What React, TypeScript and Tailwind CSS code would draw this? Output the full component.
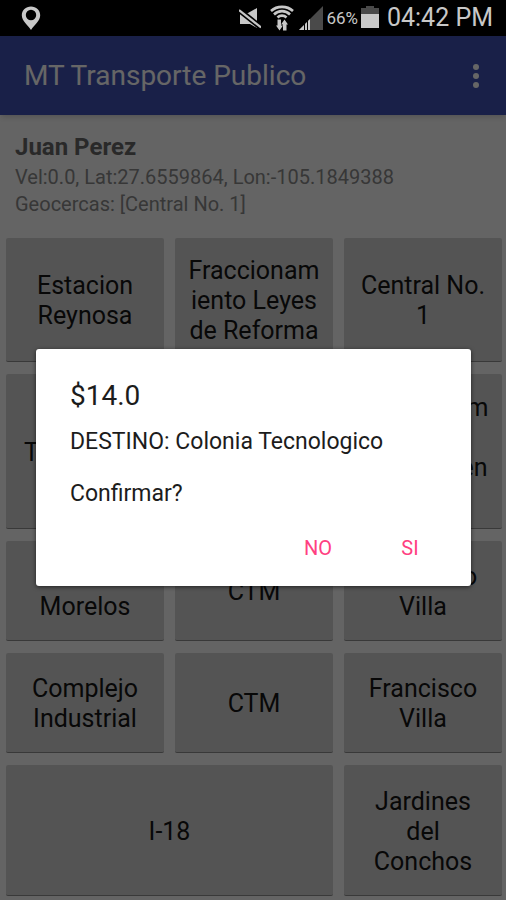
import React from "react";

type Tile = { lines: string[]; wide?: boolean; size: string };

const tiles: Tile[] = [
  { lines: ["Estacion", "Reynosa"], size: "min-h-[124px]" },
  { lines: ["Fraccionam", "iento Leyes", "de Reforma"], size: "min-h-[124px]" },
  { lines: ["Central No.", "1"], size: "min-h-[124px]" },
  { lines: ["Tecnologia"], size: "min-h-[155px]" },
  { lines: [], size: "min-h-[155px]" },
  { lines: ["Fraccionam", "iento", "Del Carmen", "II"], size: "min-h-[155px]" },
  { lines: ["Colonia", "Morelos"], size: "min-h-[100px]" },
  { lines: ["CTM"], size: "min-h-[100px]" },
  { lines: ["Francisco", "Villa"], size: "min-h-[100px]" },
  { lines: ["Complejo", "Industrial"], size: "min-h-[100px]" },
  { lines: ["CTM"], size: "min-h-[100px]" },
  { lines: ["Francisco", "Villa"], size: "min-h-[100px]" },
  { lines: ["I-18"], wide: true, size: "min-h-[131px]" },
  { lines: ["Jardines", "del", "Conchos"], size: "min-h-[131px]" },
];

function StatusBar() {
  return (
    <div className="relative z-20 flex h-9 items-center bg-black pr-[13px] pl-5 text-[#c8c8c8]">
      <svg className="h-6 w-[22px]" viewBox="0 0 22 24" aria-hidden="true">
        <path
          fill="currentColor"
          fillRule="evenodd"
          d="M11 0.5C5.8 0.5 1.8 4.3 1.8 9.2C1.8 14.8 7.5 18.5 11 24C14.5 18.5 20.2 14.8 20.2 9.2C20.2 4.3 16.2 0.5 11 0.5ZM11 3.8A5.2 5.2 0 1 1 11 14.2A5.2 5.2 0 1 1 11 3.8Z"
        />
      </svg>
      <div className="ml-auto flex items-center">
        <svg className="h-6 w-[22px]" viewBox="0 0 22 24" aria-hidden="true">
          <path fill="currentColor" d="M1 7h8l9-5v20l-7-4H1z" />
          <path d="M0 4L22 21.500" stroke="#000" strokeWidth="5.500" />
          <path d="M0 4L22 21.500" stroke="currentColor" strokeWidth="2.200" />
        </svg>
        <svg className="ml-2 h-[26px] w-[26px]" viewBox="0 0 26 26" aria-hidden="true">
          <g fill="none" stroke="currentColor" strokeWidth="2.600">
            <path d="M2 6C8 0.500 18 0.500 24 6" />
            <path d="M5 9.500C9.500 5 16.500 5 21 9.500" />
            <path d="M8.500 12.500C11 10 15 10 17.500 12.500" />
          </g>
          <path fill="currentColor" d="M8.500 14.500h3.500v6h2l-3.500 5L7 20.500h1.500zM14 25.500v-6h-2L15.500 14.500l3.500 5h-1.500v6z" />
        </svg>
        <svg className="ml-1 h-6 w-6" viewBox="0 0 24 24" aria-hidden="true">
          <path fill="#4a4a4a" d="M0 24L24 0V24z" />
          <path fill="currentColor" d="M0 24L11 13V24z" />
          <path d="M5.500 17v7M8.500 14v10" stroke="#000" strokeWidth="1" />
        </svg>
        <span className="ml-[3px] text-[17px] leading-6">66%</span>
        <svg className="ml-[3px] h-6 w-[18px]" viewBox="0 0 18 24" aria-hidden="true">
          <path fill="#4a4a4a" d="M5 0h8v2h5v7H0V2h5z" />
          <path fill="currentColor" d="M0 8h18v14H0z" />
        </svg>
        <span className="ml-2 text-[25px] leading-9">04:42 PM</span>
      </div>
    </div>
  );
}

export default function App() {
  return (
    <div className="relative h-screen overflow-hidden bg-[#fafafa] font-['Roboto','Liberation_Sans',sans-serif]">
      <StatusBar />
      <header className="flex h-[79px] items-center justify-between bg-[#3f51b5] pt-px pr-4 pl-6 text-white shadow-md">
        <h1 className="text-[28px] leading-9">MT Transporte Publico</h1>
        <button aria-label="Mas opciones" className="flex h-10 w-7 flex-col items-center justify-center gap-[3px]">
          <span className="size-[6px] rounded-full bg-white" />
          <span className="size-[6px] rounded-full bg-white" />
          <span className="size-[6px] rounded-full bg-white" />
        </button>
      </header>
      <main>
        <section className="px-[15px] pt-4 pb-5 text-xl leading-[27px] text-[#8a8a8a]">
          <h2 className="text-2xl leading-[33px] font-bold text-[#686868]">Juan Perez</h2>
          <p>Vel:0.0, Lat:27.6559864, Lon:-105.1849388</p>
          <p>Geocercas: [Central No. 1]</p>
        </section>
        <div className="grid grid-cols-3 gap-x-[11px] gap-y-3 pr-1 pl-[6px]">
          {tiles.map((tile, i) => (
            <button
              key={i}
              className={`${tile.size} ${tile.wide ? "col-span-2" : ""} flex flex-col items-center justify-center rounded-xs border-b border-[#909090] bg-[#d2d2d2] pt-[3px] text-[25px] leading-[30px] text-[#141414]`}
            >
              {tile.lines.map((line) => (
                <span key={line}>{line}</span>
              ))}
            </button>
          ))}
        </div>
      </main>
      <div className="absolute inset-0 z-10 flex items-center justify-center bg-black/60 pt-[34px] pr-[35px] pl-9">
        <div
          role="dialog"
          aria-labelledby="fare"
          className="w-full rounded-[3px] bg-white pt-[27px] pb-[14px] text-[#1c1c1c] shadow-[0_1px_4px_rgba(0,0,0,0.6)]"
        >
          <h2 id="fare" className="px-[34px] text-[28px] leading-10">$14.0</h2>
          <div className="px-[34px] pt-[13px] text-[23px] leading-[26px]">
            <p>DESTINO: Colonia Tecnologico</p>
            <p className="pt-[26px]">Confirmar?</p>
          </div>
          <div className="flex justify-end gap-3 pt-[17px] pr-[21px] text-xl text-[#ff4081]">
            <button className="h-12 w-20">NO</button>
            <button className="h-12 w-20">SI</button>
          </div>
        </div>
      </div>
    </div>
  );
}
